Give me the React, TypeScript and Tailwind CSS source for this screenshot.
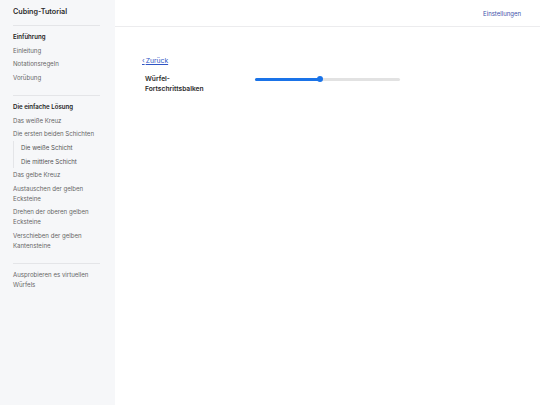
import React from 'react';

type NavItem = { label: string; sub?: boolean };

const sections: { title?: string; items: NavItem[] }[] = [
  {
    title: 'Einführung',
    items: [{ label: 'Einleitung' }, { label: 'Notationsregeln' }, { label: 'Vorübung' }],
  },
  {
    title: 'Die einfache Lösung',
    items: [
      { label: 'Das weiße Kreuz' },
      { label: 'Die ersten beiden Schichten' },
      { label: 'Die weiße Schicht', sub: true },
      { label: 'Die mittlere Schicht', sub: true },
      { label: 'Das gelbe Kreuz' },
      { label: 'Austauschen der gelben Ecksteine' },
      { label: 'Drehen der oberen gelben Ecksteine' },
      { label: 'Verschieben der gelben Kantensteine' },
    ],
  },
  {
    items: [{ label: 'Ausprobieren es virtuellen Würfels' }],
  },
];

const Sidebar: React.FC = () => (
  <aside className="w-[115px] shrink-0 bg-[#f6f7f9] pl-[13px] pr-[15px] min-h-[405px]">
    <div className="h-[26px] flex items-center text-[7.2px] font-semibold text-[#2b2b2b] border-b border-[#e4e5e8]">
      Cubing-Tutorial
    </div>
    {sections.map((s, i) => (
      <div
        key={i}
        className={i < sections.length - 1 ? 'pt-[4.5px] pb-[10px] border-b border-[#e4e5e8]' : 'pt-[4px]'}
      >
        {s.title && (
          <div className="py-[1.8px] leading-[10px] text-[6.1px] font-semibold text-[#222]">{s.title}</div>
        )}
        {s.items.map(it =>
          it.sub ? (
            <div key={it.label} className="border-l border-[#e4e5e8] pl-[7px] py-[1.8px] leading-[10px] text-[6.1px] text-[#555]">
              {it.label}
            </div>
          ) : (
            <div key={it.label} className="py-[1.8px] leading-[10px] text-[6.1px] text-[#666]">
              {it.label}
            </div>
          )
        )}
      </div>
    ))}
  </aside>
);

export default function App() {
  const value = 45;
  return (
    <div className="flex w-[540px] h-[405px] bg-white overflow-hidden" style={{ fontFamily: 'Inter, "Noto Sans", sans-serif' }}>
      <Sidebar />
      <main className="flex-1 flex flex-col">
        <header className="h-[27px] border-b border-[#ececee] flex items-center justify-end pr-[19px]">
          <a className="text-[6px] text-[#3d4fa8] cursor-pointer">Einstellungen</a>
        </header>
        <div className="pt-[18px]">
          <a className="ml-[27px] inline-block leading-[10px] text-[6.8px] text-[#2f55c4] underline cursor-pointer">
            <span className="no-underline mr-[1px]">‹</span>Zurück
          </a>
          <div className="mt-[5px] ml-[30px] flex items-start">
            <div className="w-[110px] text-[6.7px] leading-[10px] font-semibold text-[#2b2b2b]">
              Würfel-
              <br />
              Fortschrittsbalken
            </div>
            <div className="relative w-[145px] h-[10px] flex items-center">
              <div className="w-full h-[3px] rounded-full bg-[#e2e2e2]" />
              <div className="absolute left-0 h-[3px] rounded-full bg-[#1a73e8]" style={{ width: `${value}%` }} />
              <div
                className="absolute w-[6px] h-[6px] rounded-full bg-[#1a73e8] -translate-x-1/2"
                style={{ left: `${value}%` }}
              />
            </div>
          </div>
        </div>
      </main>
    </div>
  );
}
